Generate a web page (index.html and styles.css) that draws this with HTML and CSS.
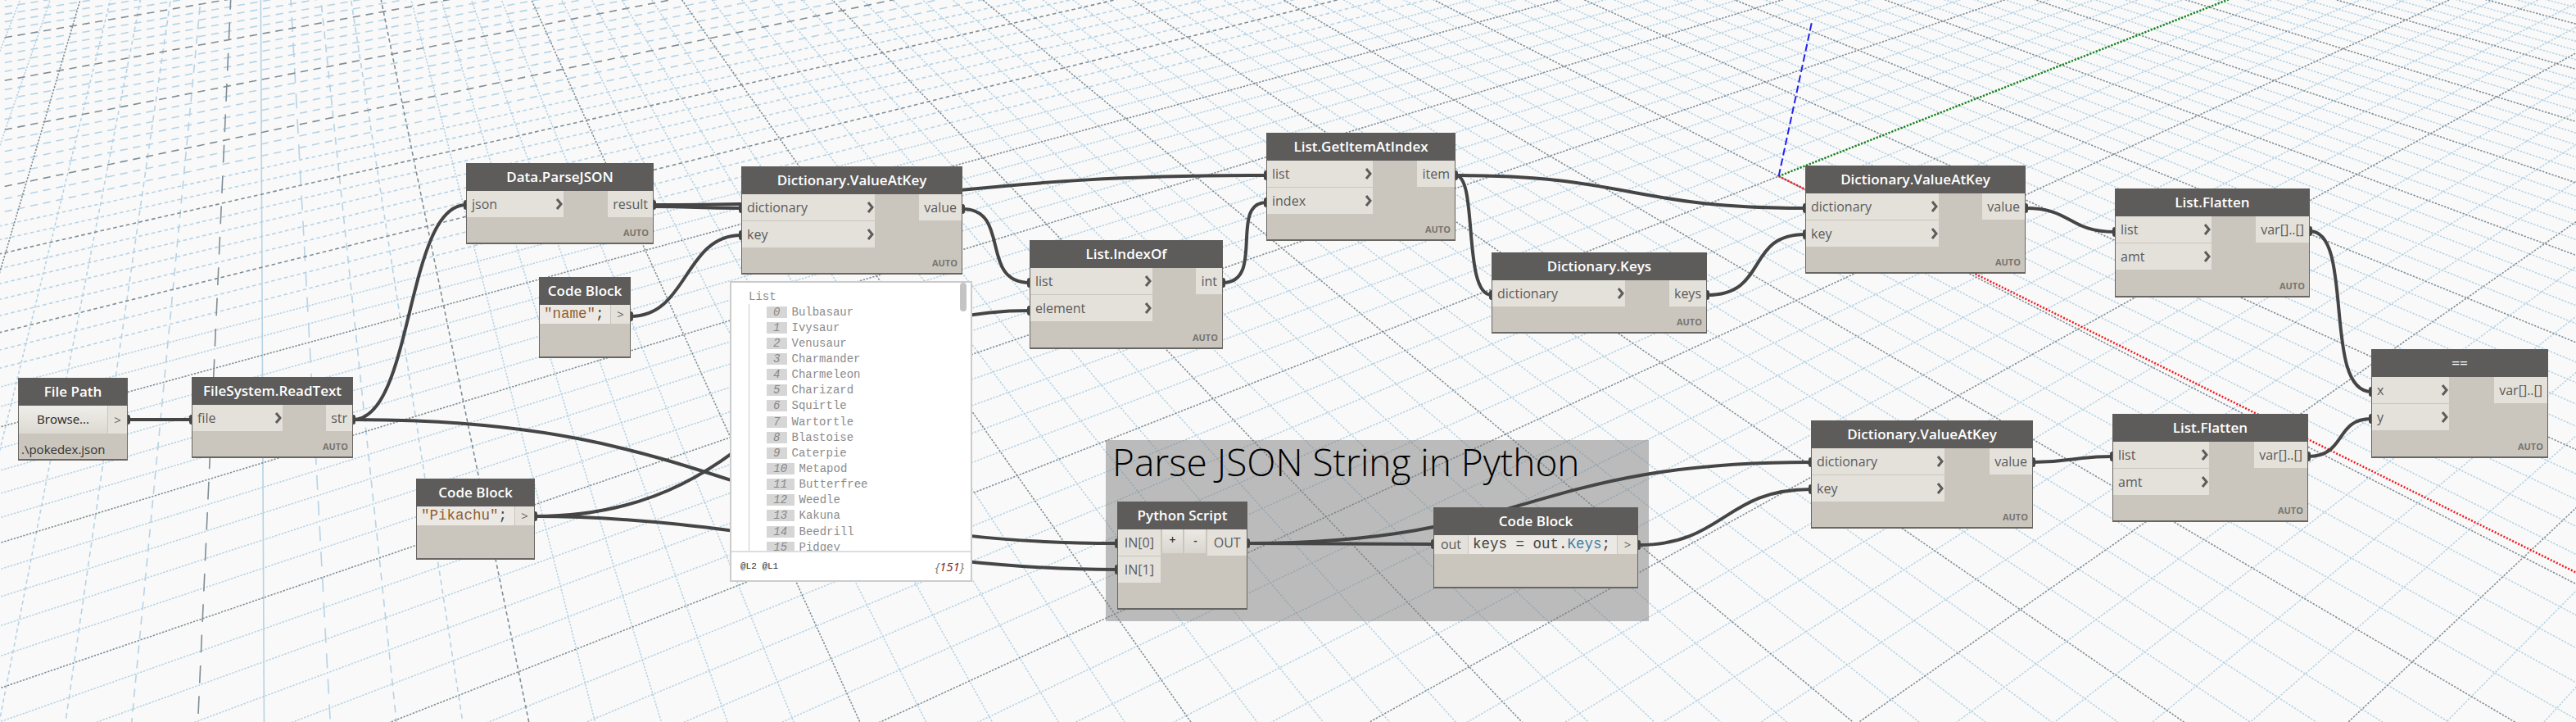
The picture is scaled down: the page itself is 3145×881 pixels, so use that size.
FILE: index.html
```html
<!DOCTYPE html>
<html lang="en">
<head>
    <meta charset="UTF-8">
    <title>pokedex.dyn</title>
    <link rel="stylesheet" href="styles.css">
</head>
<body>
<div class="canvas">
    <!-- ground grid, filled in by grid.js -->
    <svg id="grid" class="layer" width="3145" height="881"></svg>

    <div class="group">
        <div class="group-title">Parse JSON String in Python</div>
    </div>

    <svg class="layer" width="3145" height="881">
        <g class="wires">
            <path d="M156 512 L234 512"/>
            <path d="M431 512 C505 512 495 250 569 250"/>
            <path d="M431 512 C897 512 897 663 1364 663"/>
            <path d="M798 250 C1172 250 1172 214 1546 214"/>
            <path d="M798 252 C850 252 850 254 905 254"/>
            <path d="M770 386 C840 386 835 287 905 287"/>
            <path d="M653 630 C955 630 955 379 1257 379"/>
            <path d="M653 630 C900 630 1100 695 1364 695"/>
            <path d="M1175 255 C1235 255 1195 345 1257 345"/>
            <path d="M1493 345 C1545 345 1500 247 1546 247"/>
            <path d="M1777 214 C1990 214 1990 254 2204 254"/>
            <path d="M1777 214 C1805 214 1785 360 1821 360"/>
            <path d="M2084 360 C2160 360 2130 286 2204 286"/>
            <path d="M2473 254 C2530 254 2525 283 2582 283"/>
            <path d="M2820 282 C2875 282 2835 478 2895 478"/>
            <path d="M1523 663 C1866 663 1866 564 2211 564"/>
            <path d="M1523 663 C1640 663 1640 664 1750 664"/>
            <path d="M2000 665 C2105 665 2105 597 2211 597"/>
            <path d="M2482 564 C2530 564 2530 557 2579 557"/>
            <path d="M2818 557 C2865 557 2850 511 2895 511"/>
        </g>
        <g class="ports">
            <rect x="153" y="506" width="6" height="12" rx="3"/>
            <rect x="231" y="506" width="6" height="12" rx="3"/>
            <rect x="428" y="506" width="6" height="12" rx="3"/>
            <rect x="566" y="244" width="6" height="12" rx="3"/>
            <rect x="795" y="244" width="6" height="12" rx="3"/>
            <rect x="767" y="380" width="6" height="12" rx="3"/>
            <rect x="650" y="624" width="6" height="12" rx="3"/>
            <rect x="902" y="248" width="6" height="12" rx="3"/>
            <rect x="902" y="281" width="6" height="12" rx="3"/>
            <rect x="1172" y="249" width="6" height="12" rx="3"/>
            <rect x="1254" y="339" width="6" height="12" rx="3"/>
            <rect x="1254" y="373" width="6" height="12" rx="3"/>
            <rect x="1490" y="339" width="6" height="12" rx="3"/>
            <rect x="1543" y="208" width="6" height="12" rx="3"/>
            <rect x="1543" y="241" width="6" height="12" rx="3"/>
            <rect x="1774" y="208" width="6" height="12" rx="3"/>
            <rect x="1818" y="354" width="6" height="12" rx="3"/>
            <rect x="2081" y="354" width="6" height="12" rx="3"/>
            <rect x="2201" y="248" width="6" height="12" rx="3"/>
            <rect x="2201" y="280" width="6" height="12" rx="3"/>
            <rect x="2470" y="248" width="6" height="12" rx="3"/>
            <rect x="2579" y="277" width="6" height="12" rx="3"/>
            <rect x="2817" y="276" width="6" height="12" rx="3"/>
            <rect x="2892" y="472" width="6" height="12" rx="3"/>
            <rect x="2892" y="505" width="6" height="12" rx="3"/>
            <rect x="1361" y="657" width="6" height="12" rx="3"/>
            <rect x="1361" y="689" width="6" height="12" rx="3"/>
            <rect x="1520" y="657" width="6" height="12" rx="3"/>
            <rect x="1747" y="658" width="6" height="12" rx="3"/>
            <rect x="1997" y="659" width="6" height="12" rx="3"/>
            <rect x="2208" y="558" width="6" height="12" rx="3"/>
            <rect x="2208" y="591" width="6" height="12" rx="3"/>
            <rect x="2479" y="558" width="6" height="12" rx="3"/>
            <rect x="2576" y="551" width="6" height="12" rx="3"/>
            <rect x="2815" y="551" width="6" height="12" rx="3"/>
        </g>
    </svg>

    <div class="node n-filepath">
        <div class="node-title">File Path</div>
        <div class="browse-row">
            <div class="browse-btn">Browse...</div>
            <div class="port-arrow">&gt;</div>
        </div>
        <div class="path-text">.\pokedex.json</div>
    </div>

    <div class="node n-read">
        <div class="node-title">FileSystem.ReadText</div>
        <div class="node-body">
            <div class="inputs">
                <div class="in-port"><span>file</span><svg class="chev" viewBox="0 0 9 14"><path d="M2 1 L7 7 L2 13"/></svg></div>
            </div>
            <div class="outputs"><div class="out-port">str</div></div>
        </div>
        <div class="lacing">AUTO</div>
    </div>

    <div class="node n-parse">
        <div class="node-title">Data.ParseJSON</div>
        <div class="node-body">
            <div class="inputs">
                <div class="in-port"><span>json</span><svg class="chev" viewBox="0 0 9 14"><path d="M2 1 L7 7 L2 13"/></svg></div>
            </div>
            <div class="outputs"><div class="out-port">result</div></div>
        </div>
        <div class="lacing">AUTO</div>
    </div>

    <div class="node n-name">
        <div class="node-title">Code Block</div>
        <div class="code-row">
            <div class="code-cell"><span class="str">"name"</span>;</div>
            <div class="port-arrow">&gt;</div>
        </div>
    </div>

    <div class="node n-pikachu">
        <div class="node-title">Code Block</div>
        <div class="code-row">
            <div class="code-cell"><span class="str">"Pikachu"</span>;</div>
            <div class="port-arrow">&gt;</div>
        </div>
    </div>

    <div class="node n-dict1">
        <div class="node-title">Dictionary.ValueAtKey</div>
        <div class="node-body">
            <div class="inputs">
                <div class="in-port"><span>dictionary</span><svg class="chev" viewBox="0 0 9 14"><path d="M2 1 L7 7 L2 13"/></svg></div>
                <div class="in-port"><span>key</span><svg class="chev" viewBox="0 0 9 14"><path d="M2 1 L7 7 L2 13"/></svg></div>
            </div>
            <div class="outputs"><div class="out-port">value</div></div>
        </div>
        <div class="lacing">AUTO</div>
    </div>

    <div class="node n-getitem">
        <div class="node-title">List.GetItemAtIndex</div>
        <div class="node-body">
            <div class="inputs">
                <div class="in-port"><span>list</span><svg class="chev" viewBox="0 0 9 14"><path d="M2 1 L7 7 L2 13"/></svg></div>
                <div class="in-port"><span>index</span><svg class="chev" viewBox="0 0 9 14"><path d="M2 1 L7 7 L2 13"/></svg></div>
            </div>
            <div class="outputs"><div class="out-port">item</div></div>
        </div>
        <div class="lacing">AUTO</div>
    </div>

    <div class="node n-indexof">
        <div class="node-title">List.IndexOf</div>
        <div class="node-body">
            <div class="inputs">
                <div class="in-port"><span>list</span><svg class="chev" viewBox="0 0 9 14"><path d="M2 1 L7 7 L2 13"/></svg></div>
                <div class="in-port"><span>element</span><svg class="chev" viewBox="0 0 9 14"><path d="M2 1 L7 7 L2 13"/></svg></div>
            </div>
            <div class="outputs"><div class="out-port">int</div></div>
        </div>
        <div class="lacing">AUTO</div>
    </div>

    <div class="node n-keys">
        <div class="node-title">Dictionary.Keys</div>
        <div class="node-body">
            <div class="inputs">
                <div class="in-port"><span>dictionary</span><svg class="chev" viewBox="0 0 9 14"><path d="M2 1 L7 7 L2 13"/></svg></div>
            </div>
            <div class="outputs"><div class="out-port">keys</div></div>
        </div>
        <div class="lacing">AUTO</div>
    </div>

    <div class="node n-dict2">
        <div class="node-title">Dictionary.ValueAtKey</div>
        <div class="node-body">
            <div class="inputs">
                <div class="in-port"><span>dictionary</span><svg class="chev" viewBox="0 0 9 14"><path d="M2 1 L7 7 L2 13"/></svg></div>
                <div class="in-port"><span>key</span><svg class="chev" viewBox="0 0 9 14"><path d="M2 1 L7 7 L2 13"/></svg></div>
            </div>
            <div class="outputs"><div class="out-port">value</div></div>
        </div>
        <div class="lacing">AUTO</div>
    </div>

    <div class="node n-flatten1">
        <div class="node-title">List.Flatten</div>
        <div class="node-body">
            <div class="inputs">
                <div class="in-port"><span>list</span><svg class="chev" viewBox="0 0 9 14"><path d="M2 1 L7 7 L2 13"/></svg></div>
                <div class="in-port"><span>amt</span><svg class="chev" viewBox="0 0 9 14"><path d="M2 1 L7 7 L2 13"/></svg></div>
            </div>
            <div class="outputs"><div class="out-port">var[]..[]</div></div>
        </div>
        <div class="lacing">AUTO</div>
    </div>

    <div class="node n-equals">
        <div class="node-title">==</div>
        <div class="node-body">
            <div class="inputs">
                <div class="in-port"><span>x</span><svg class="chev" viewBox="0 0 9 14"><path d="M2 1 L7 7 L2 13"/></svg></div>
                <div class="in-port"><span>y</span><svg class="chev" viewBox="0 0 9 14"><path d="M2 1 L7 7 L2 13"/></svg></div>
            </div>
            <div class="outputs"><div class="out-port">var[]..[]</div></div>
        </div>
        <div class="lacing">AUTO</div>
    </div>

    <div class="node n-dict3">
        <div class="node-title">Dictionary.ValueAtKey</div>
        <div class="node-body">
            <div class="inputs">
                <div class="in-port"><span>dictionary</span><svg class="chev" viewBox="0 0 9 14"><path d="M2 1 L7 7 L2 13"/></svg></div>
                <div class="in-port"><span>key</span><svg class="chev" viewBox="0 0 9 14"><path d="M2 1 L7 7 L2 13"/></svg></div>
            </div>
            <div class="outputs"><div class="out-port">value</div></div>
        </div>
        <div class="lacing">AUTO</div>
    </div>

    <div class="node n-flatten2">
        <div class="node-title">List.Flatten</div>
        <div class="node-body">
            <div class="inputs">
                <div class="in-port"><span>list</span><svg class="chev" viewBox="0 0 9 14"><path d="M2 1 L7 7 L2 13"/></svg></div>
                <div class="in-port"><span>amt</span><svg class="chev" viewBox="0 0 9 14"><path d="M2 1 L7 7 L2 13"/></svg></div>
            </div>
            <div class="outputs"><div class="out-port">var[]..[]</div></div>
        </div>
        <div class="lacing">AUTO</div>
    </div>

    <div class="node n-python">
        <div class="node-title">Python Script</div>
        <div class="py-body">
            <div class="py-inputs">
                <div class="py-port">IN[0]</div>
                <div class="py-port">IN[1]</div>
            </div>
            <div class="py-btn">+</div>
            <div class="py-btn">-</div>
            <div class="py-port py-out">OUT</div>
        </div>
    </div>

    <div class="node n-codekeys">
        <div class="node-title">Code Block</div>
        <div class="code-row">
            <div class="in-cell">out</div>
            <div class="code-cell">keys = out.<span class="member">Keys</span>;</div>
            <div class="port-arrow">&gt;</div>
        </div>
    </div>

    <!-- watch bubble over the nodes -->
    <div class="preview">
        <div class="preview-main">
            <div class="preview-scroll"></div>
            <div class="preview-head">List</div>
            <div class="preview-rows">
                <div class="item"><span class="idx">0</span>Bulbasaur</div>
                <div class="item"><span class="idx">1</span>Ivysaur</div>
                <div class="item"><span class="idx">2</span>Venusaur</div>
                <div class="item"><span class="idx">3</span>Charmander</div>
                <div class="item"><span class="idx">4</span>Charmeleon</div>
                <div class="item"><span class="idx">5</span>Charizard</div>
                <div class="item"><span class="idx">6</span>Squirtle</div>
                <div class="item"><span class="idx">7</span>Wartortle</div>
                <div class="item"><span class="idx">8</span>Blastoise</div>
                <div class="item"><span class="idx">9</span>Caterpie</div>
                <div class="item"><span class="idx wide">10</span>Metapod</div>
                <div class="item"><span class="idx wide">11</span>Butterfree</div>
                <div class="item"><span class="idx wide">12</span>Weedle</div>
                <div class="item"><span class="idx wide">13</span>Kakuna</div>
                <div class="item"><span class="idx wide">14</span>Beedrill</div>
                <div class="item"><span class="idx wide">15</span>Pidgey</div>
            </div>
        </div>
        <div class="preview-foot">
            <span class="levels">@L2 @L1</span>
            <span class="count">{<b>151</b>}</span>
        </div>
    </div>
</div>
<script src="grid.js"></script>
</body>
</html>
```
FILE: styles.css
```css
* {
    box-sizing: border-box;
}

body {
    margin: 0;
    background: #f9f9f9;
    font-family: "Open Sans", sans-serif;
    overflow: hidden;
}

.canvas {
    position: relative;
    width: 3145px;
    height: 881px;
    overflow: hidden;
}

.layer {
    position: absolute;
    left: 0;
    top: 0;
}

/* grid */
.grid-minor {
    stroke: #b6d3e5;
    stroke-width: 1.6;
}

.grid-major {
    stroke: #7f8d96;
    stroke-width: 1.6;
}

.axis-x {
    stroke: #f5171c;
    stroke-width: 2.5;
    stroke-dasharray: 2 2;
}

.axis-y {
    stroke: #128a18;
    stroke-width: 2.5;
    stroke-dasharray: 2 2;
}

.axis-z {
    stroke: #2222f0;
    stroke-width: 2;
    stroke-dasharray: 9 4;
}

/* wires */
.wires path {
    fill: none;
    stroke: #454545;
    stroke-width: 4;
}

.ports rect {
    fill: #454545;
}

/* group */
.group {
    position: absolute;
    left: 1350px;
    top: 537px;
    width: 663px;
    height: 221px;
    background: rgba(125, 125, 125, 0.5);
}

.group-title {
    padding: 0 0 0 8px;
    font-size: 46px;
    font-weight: 300;
    line-height: 52px;
    color: #000;
}

/* nodes */
.node {
    position: absolute;
    background: #cac6be;
    border: 1px solid #686662;
    border-bottom-width: 2px;
    color: #5a5a5a;
    font-size: 16px;
}

.node-title {
    height: 34px;
    margin: -1px -1px 0;
    background: #5e5c5a;
    color: #fff;
    font-size: 17px;
    font-weight: 600;
    line-height: 34px;
    text-align: center;
}

.node-body {
    display: flex;
    justify-content: space-between;
}

.inputs {
    display: flex;
    flex-direction: column;
    gap: 1px;
}

.in-port {
    display: flex;
    justify-content: space-between;
    align-items: center;
    height: 32px;
    padding: 0 1px 0 6px;
    background: #e4e1db;
}

.chev {
    width: 9px;
    height: 14px;
}

.chev path {
    fill: none;
    stroke: #5e5c5a;
    stroke-width: 3;
}

.out-port {
    height: 32px;
    padding: 0 6px;
    background: #e4e1db;
    line-height: 32px;
    text-align: right;
}

.lacing {
    position: absolute;
    right: 5px;
    bottom: 5px;
    color: #77756f;
    font-size: 11px;
    font-weight: 700;
}

.port-arrow {
    flex: 1;
    background: #e4e1db;
    color: #666;
    font-size: 15px;
    text-align: center;
}

/* file path */
.browse-row {
    display: flex;
    height: 34px;
}

.browse-btn {
    width: 108px;
    background: linear-gradient(#f0eeea, #dcd9d2);
    color: #222;
    font-size: 15px;
    line-height: 32px;
    text-align: center;
}

.browse-row .port-arrow {
    margin-left: 1px;
    line-height: 34px;
}

.path-text {
    padding: 9px 0 0 3px;
    color: #333;
    font-size: 15px;
}

/* code blocks */
.code-row {
    display: flex;
    gap: 1px;
    height: 23px;
    line-height: 23px;
    font-family: "Liberation Mono", monospace;
    font-size: 17.5px;
}

.code-cell {
    padding-left: 5px;
    background: #ece9e4;
    color: #444;
    white-space: nowrap;
}

.code-cell .str {
    color: #8f5d33;
}

.code-cell .member {
    color: #3c7ea6;
}

.code-row .port-arrow {
    font-family: "Open Sans", sans-serif;
    line-height: 22px;
}

.in-cell {
    width: 41px;
    background: #e4e1db;
    font-family: "Open Sans", sans-serif;
    font-size: 16px;
    text-align: center;
}

/* python script */
.py-body {
    display: flex;
    align-items: flex-start;
    gap: 2px;
}

.py-inputs {
    display: flex;
    flex-direction: column;
    gap: 1px;
    width: 52px;
}

.py-port {
    height: 32px;
    background: #e4e1db;
    line-height: 32px;
    text-align: center;
}

.py-out {
    width: 48px;
}

.py-btn {
    width: 26px;
    height: 29px;
    background: linear-gradient(#ece9e4, #d9d6cf);
    color: #333;
    font-size: 14px;
    font-weight: 600;
    line-height: 26px;
    text-align: center;
}

/* positions on the canvas */
.n-filepath { left: 22px; top: 461px; width: 134px; height: 101px; }
.n-read { left: 234px; top: 460px; width: 197px; height: 99px; }
.n-parse { left: 569px; top: 199px; width: 229px; height: 99px; }
.n-name { left: 658px; top: 338px; width: 112px; height: 99px; }
.n-pikachu { left: 508px; top: 584px; width: 145px; height: 99px; }
.n-dict1 { left: 905px; top: 203px; width: 270px; height: 132px; }
.n-getitem { left: 1546px; top: 162px; width: 231px; height: 132px; }
.n-indexof { left: 1257px; top: 293px; width: 236px; height: 133px; }
.n-keys { left: 1821px; top: 308px; width: 263px; height: 99px; }
.n-dict2 { left: 2204px; top: 202px; width: 269px; height: 132px; }
.n-flatten1 { left: 2582px; top: 230px; width: 238px; height: 133px; }
.n-equals { left: 2895px; top: 426px; width: 216px; height: 133px; }
.n-dict3 { left: 2211px; top: 513px; width: 271px; height: 132px; }
.n-flatten2 { left: 2579px; top: 505px; width: 239px; height: 132px; }
.n-python { left: 1364px; top: 612px; width: 159px; height: 132px; }
.n-codekeys { left: 1750px; top: 619px; width: 250px; height: 99px; }

.n-read .inputs { width: 110px; }
.n-parse .inputs { width: 118px; }
.n-dict1 .inputs, .n-keys .inputs, .n-dict2 .inputs, .n-dict3 .inputs { width: 162px; }
.n-getitem .inputs { width: 129px; }
.n-indexof .inputs { width: 149px; }
.n-flatten1 .inputs, .n-flatten2 .inputs { width: 117px; }
.n-equals .inputs { width: 94px; }

.n-name .code-cell { width: 86px; }
.n-pikachu .code-cell { width: 119px; }
.n-codekeys .code-cell { width: 181px; }

/* watch bubble */
.preview {
    position: absolute;
    left: 891px;
    top: 343px;
    width: 296px;
    height: 367px;
    display: flex;
    flex-direction: column;
    background: #fff;
    border: 2px solid #ccc;
    font-family: "Liberation Mono", monospace;
    color: #8b8b8b;
}

.preview-main {
    position: relative;
    flex: 1;
    overflow: hidden;
    padding: 8px 0 0 21px;
    font-size: 14px;
}

.preview-scroll {
    position: absolute;
    right: 5px;
    top: 0;
    width: 8px;
    height: 35px;
    border-radius: 4px;
    background: #c4c4c4;
}

.preview-head {
    height: 18px;
    line-height: 18px;
}

.preview-rows {
    height: 303px;
    padding-left: 21px;
    border-left: 1px solid #ccc;
}

.item {
    display: flex;
    align-items: center;
    height: 19.15px;
}

.idx {
    width: 24.5px;
    height: 14px;
    margin-right: 6px;
    background: #d6d6d6;
    color: #888;
    font-style: italic;
    line-height: 14px;
    text-align: center;
}

.idx.wide {
    width: 33.5px;
}

.preview-foot {
    display: flex;
    justify-content: space-between;
    align-items: center;
    height: 36px;
    padding: 0 8px 0 11px;
    border-top: 2px solid #ddd;
}

.levels {
    color: #333;
    font-size: 11px;
}

.count {
    color: #777;
    font-family: "Open Sans", sans-serif;
    font-size: 15px;
    font-style: italic;
}

.count b {
    color: #7a2323;
    font-weight: 400;
}
```
FILE: grid.js
```js
// ground plane grid, drawn in perspective from two vanishing points
var svg = document.getElementById('grid');
var NS = 'http://www.w3.org/2000/svg';
var W = 3145, H = 881;
var origin = [2171.6, 215];
var vpX = [4586, -734];   // lines running along the green axis
var vpY = [315, -734];    // lines running along the red axis
var stepX = 0.0556, stepY = 0.0822;

function project(i, j) {
    var w = 1 + i * stepX + j * stepY;
    return [
        (origin[0] + i * stepX * vpX[0] + j * stepY * vpY[0]) / w,
        (origin[1] + i * stepX * vpX[1] + j * stepY * vpY[1]) / w
    ];
}

// the original's thin lines break up in a stair pattern, longer the flatter they run
function dash(period) {
    var on = period * 0.58;
    return on.toFixed(1) + ' ' + (period - on).toFixed(1);
}

function dashAlong(slope) {
    if (slope < 0.22) return dash(16);
    if (slope < 0.26) return dash(8);
    return dash(4);
}

function dashAcross(slope) {
    if (slope < 0.008) return null;
    if (slope > 0.25) return dash(4);
    return dash(Math.max(4, Math.min(41, 1.7 / slope)));
}

function addLine(x1, y1, x2, y2, cls, dashes) {
    var l = document.createElementNS(NS, 'line');
    l.setAttribute('x1', x1);
    l.setAttribute('y1', y1);
    l.setAttribute('x2', x2);
    l.setAttribute('y2', y2);
    l.setAttribute('class', cls);
    if (dashes) l.setAttribute('stroke-dasharray', dashes);
    svg.appendChild(l);
}

function drawLines(major) {
    for (var n = -30; n <= 80; n++) {
        if ((n % 5 === 0) !== major) continue;
        var p = project(0, n / 5);
        var s = (vpX[1] - p[1]) / (vpX[0] - p[0]);
        addLine(-10, p[1] + s * (-10 - p[0]), W + 10, p[1] + s * (W + 10 - p[0]),
            major ? 'grid-major' : 'grid-minor', dashAlong(Math.abs(s)));
    }
    for (var m = -50; m <= 40; m++) {
        if ((m % 5 === 0) !== major) continue;
        var q = project(m / 5, 0);
        var t = (vpY[0] - q[0]) / (vpY[1] - q[1]);
        addLine(q[0] + t * (-10 - q[1]), -10, q[0] + t * (H + 10 - q[1]), H + 10,
            major ? 'grid-major' : 'grid-minor', dashAcross(Math.abs(t)));
    }
}

drawLines(false);
drawLines(true);

addLine(origin[0], origin[1], 3160, 706, 'axis-x');
addLine(origin[0], origin[1], 2760, -16, 'axis-y');
addLine(origin[0], origin[1], 2212, 27, 'axis-z');
```
